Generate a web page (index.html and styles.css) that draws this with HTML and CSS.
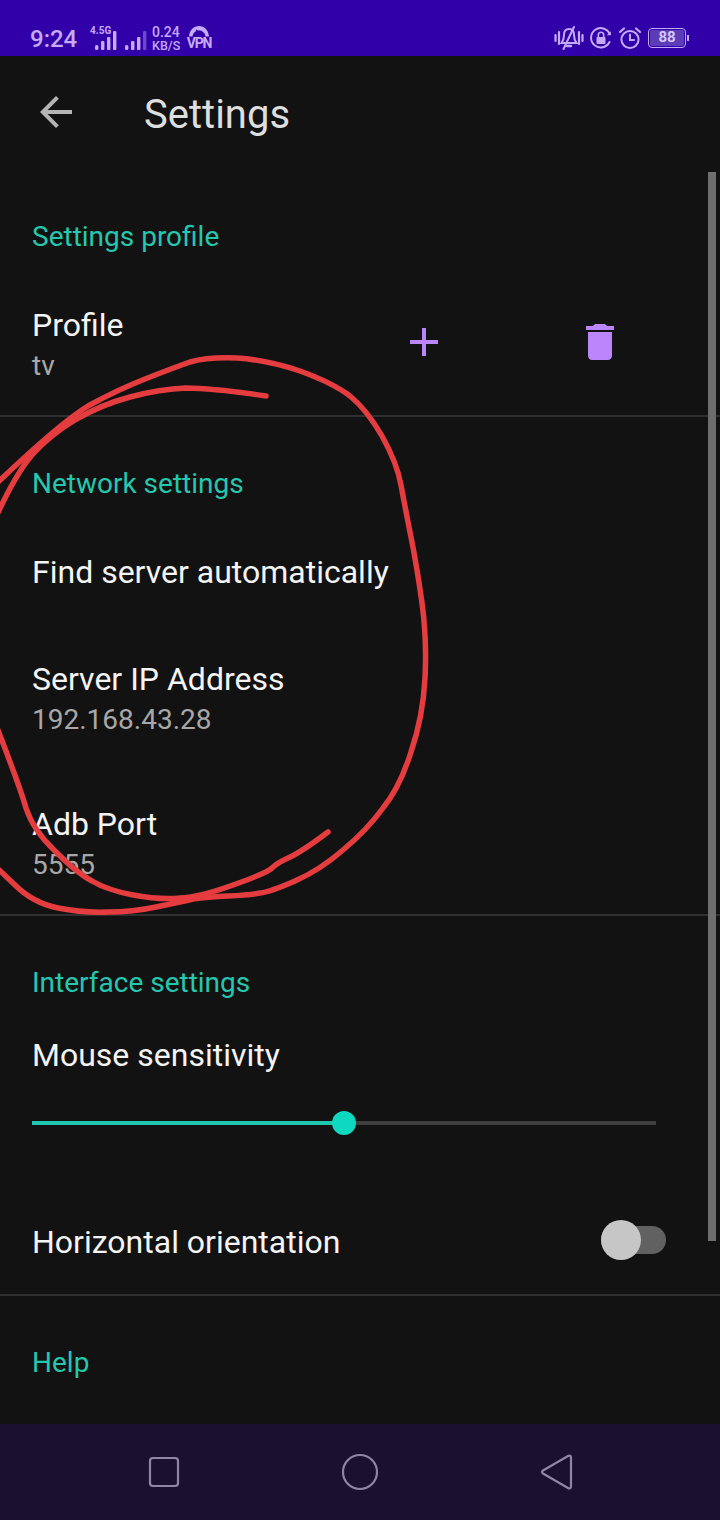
FILE: index.html
```html
<!DOCTYPE html>
<html lang="en">
<head>
<meta charset="utf-8">
<title>Settings</title>
<link rel="stylesheet" href="styles.css">
</head>
<body>
<div class="screen">
  <header class="statusbar">
    <div class="status-left">
      <span class="clock">9:24</span>
      <div class="signal">
        <span class="net">4.5G</span>
        <svg class="bars" width="24" height="21" viewBox="0 0 24 21"><rect x="0" y="15" width="3.4" height="5" rx="1.5"/><rect x="6" y="11" width="3.4" height="9" rx="1"/><rect x="12" y="7" width="3.4" height="13" rx="1"/><rect x="18" y="1" width="3.4" height="19" rx="1"/></svg>
      </div>
      <svg class="bars bars-two" width="24" height="21" viewBox="0 0 24 21"><rect x="0" y="15" width="3.4" height="5" rx="1.5"/><rect x="6" y="11" width="3.4" height="9" rx="1"/><rect x="12" y="7" width="3.4" height="13" rx="1"/><rect x="18" y="1" width="3.4" height="19" rx="1" class="dim"/></svg>
      <div class="speed"><span>0.24</span><span class="unit">KB/S</span></div>
      <div class="vpn">
        <svg width="24" height="12" viewBox="0 0 24 12"><path d="M2 11.500C2.500 5 7 1 12 1s9.500 4 10 10.500h-3.500C18 8 15.500 5.500 12 5.500S6 8 5.500 11.500z"/><path d="M9 5l6 5" class="needle"/></svg>
        <span>VPN</span>
      </div>
    </div>
    <div class="status-right">
      <svg class="si" width="30" height="26" viewBox="0 0 30 26" fill="none"><path d="M1.500 10v6M5 7v12M25 7v12M28.500 10v6" stroke-width="2.200"/><path d="M15 4c-3.500 0-5 2.500-5 6 0 4-1 6-2.500 8h15c-1.500-2-2.500-4-2.500-8 0-3.500-1.500-6-5-6z" stroke-width="2"/><path d="M13 21h4" stroke-width="2.400"/><path d="M20 2L9.500 24" stroke-width="2"/></svg>
      <svg class="si" width="22" height="22" viewBox="0 0 22 22" fill="none"><path d="M19.500 15A9.700 9.700 0 1 1 19.700 7" stroke-width="2"/><path d="M20.800 4.200v4h-4z" class="fillc"/><rect x="6.500" y="10" width="9" height="7" rx="1" class="fillc"/><path d="M8.300 10V8a2.700 2.700 0 0 1 5.400 0v2" stroke-width="1.600"/></svg>
      <svg class="si" width="24" height="24" viewBox="0 0 24 24" fill="none"><circle cx="12" cy="13.500" r="8.600" stroke-width="2"/><path d="M12 8.500v5.500h4" stroke-width="2"/><path d="M2 6l4-3.500M22 6l-4-3.500" stroke-width="2.200"/></svg>
      <div class="battery"><span class="battery-body">88</span><span class="battery-nub"></span></div>
    </div>
  </header>

  <div class="toolbar">
    <svg class="back" width="48" height="48" viewBox="0 0 24 24"><path d="M20 11H7.830l5.590-5.590L12 4l-8 8 8 8 1.410-1.410L7.830 13H20v-2z"/></svg>
    <h1 class="title">Settings</h1>
  </div>

  <main class="content">
    <section class="section section-profile">
      <h2 class="section-title">Settings profile</h2>
      <div class="pref pref-profile">
        <div>
          <div class="pref-title">Profile</div>
          <div class="pref-sub">tv</div>
        </div>
        <div class="actions">
          <svg class="action" width="48" height="48" viewBox="0 0 24 24"><path d="M19 13h-6v6h-2v-6H5v-2h6V5h2v6h6v2z"/></svg>
          <svg class="action" width="48" height="48" viewBox="0 0 24 24"><path d="M6 19c0 1.100.9 2 2 2h8c1.100 0 2-.9 2-2V7H6v12zM19 4h-3.500l-1-1h-5l-1 1H5v2h14V4z"/></svg>
        </div>
      </div>
    </section>

    <section class="section section-network">
      <h2 class="section-title">Network settings</h2>
      <div class="pref pref-find"><div class="pref-title">Find server automatically</div></div>
      <div class="pref pref-ip">
        <div class="pref-title">Server IP Address</div>
        <div class="pref-sub">192.168.43.28</div>
      </div>
      <div class="pref pref-port">
        <div class="pref-title">Adb Port</div>
        <div class="pref-sub">5555</div>
      </div>
    </section>

    <section class="section section-interface">
      <h2 class="section-title">Interface settings</h2>
      <div class="pref-title mouse">Mouse sensitivity</div>
      <div class="slider">
        <div class="slider-fill"></div>
        <div class="slider-thumb"></div>
      </div>
      <div class="pref-horizontal">
        <div class="pref-title">Horizontal orientation</div>
        <div class="toggle"><div class="toggle-thumb"></div></div>
      </div>
    </section>

    <section class="section section-help">
      <h2 class="section-title">Help</h2>
    </section>
  </main>

  <nav class="navbar">
    <svg width="32" height="32" viewBox="0 0 32 32" fill="none"><rect x="2" y="2" width="28" height="28" rx="3"/></svg>
    <svg width="38" height="38" viewBox="0 0 38 38" fill="none"><circle cx="19" cy="19" r="17"/></svg>
    <svg width="34" height="36" viewBox="0 0 34 36" fill="none"><path d="M3 16.500L28 2c1.500-.8 3-.3 3 1.500v29c0 1.800-1.500 2.300-3 1.500L3 19.500c-1.300-.8-1.300-2.200 0-3z"/></svg>
  </nav>

  <div class="scrollbar"></div>

  <svg class="scribble" width="720" height="1520" viewBox="0 0 720 1520" fill="none">
    <path d="M-4 484Q60 423 88 406Q117 390 145 379Q173 368 190 362Q207 357 237 358Q267 360 300 371Q333 383 350 396Q367 410 382 436Q397 463 401 485Q405 507 411 537Q417 567 422 603Q427 640 425 678Q423 717 411 752Q400 787 383 808Q367 830 343 850Q320 870 295 881Q270 892 260 893Q250 895 228 896Q207 897 193 899Q180 902 156 907Q133 912 108 912Q83 913 58 908Q33 903 15 885L-4 867"/>
    <path d="M266 396Q213 388 186 388Q160 389 130 397Q100 405 75 420Q50 435 32 455Q15 475 -4 517"/>
    <path d="M-4 725Q20 787 26 808Q33 830 55 851Q77 873 92 881Q107 890 133 895Q160 900 180 898Q200 897 233 885Q267 873 272 868Q277 863 288 858Q300 853 328 832"/>
  </svg>
</div>
</body>
</html>
```
FILE: styles.css
```css
* { box-sizing: border-box; }
html, body { margin: 0; padding: 0; }
body { background: #121212; font-family: Roboto, "Noto Sans", sans-serif; }
.screen { position: relative; width: 720px; height: 1520px; overflow: hidden; background: #121212; display: flex; flex-direction: column; }

.statusbar { height: 56px; flex: none; background: #3200a9; color: #c4aaf8; display: flex; justify-content: space-between; align-items: flex-end; padding: 0 31px 4px 30px; }
.status-left, .status-right { display: flex; align-items: center; }
.status-left { height: 26px; }
.clock { font-size: 24px; font-weight: 500; line-height: 26px; width: 65px; }
.signal { position: relative; width: 30px; height: 21px; margin-top: 2px; }
.net { position: absolute; left: -5px; top: -4px; font-size: 10px; font-weight: 700; line-height: 10px; }
.bars { fill: #c4aaf8; display: block; }
.signal .bars { position: absolute; left: 0; top: 0; }
.bars-two { margin-top: 2px; }
.bars .dim { fill: #6c47cf; }
.speed { display: flex; flex-direction: column; margin-left: 3px; width: 35px; font-size: 14px; font-weight: 500; line-height: 13px; }
.unit { font-size: 12.500px; }
.vpn { display: flex; flex-direction: column; align-items: center; width: 24px; margin-bottom: 4px; font-size: 14px; font-weight: 700; line-height: 12px; letter-spacing: -1.200px; }
.vpn svg { fill: #c4aaf8; display: block; }
.vpn .needle { stroke: #3200a9; stroke-width: 1.200; fill: none; }
.status-right { height: 28px; }
.si { stroke: #c4aaf8; display: block; stroke-linecap: round; margin-right: 6px; }
.si .fillc { fill: #c4aaf8; stroke: none; }
.battery { display: flex; align-items: center; }
.battery-body { width: 38px; height: 20px; border: 1.500px solid #c4aaf8; border-radius: 4px; background: #5c3cb8; background-clip: content-box; padding: 1px; color: #d6c6fb; font-size: 15px; font-weight: 700; line-height: 15px; text-align: center; }
.battery-nub { width: 2px; height: 6px; background: #c4aaf8; margin-left: 1px; }

.toolbar { height: 116px; flex: none; display: flex; align-items: center; padding-left: 32px; }
.back { fill: #b4b4b4; display: block; margin-top: -4px; }
.title { margin: 2px 0 0 64px; font-size: 40px; font-weight: 400; line-height: 40px; color: #dedede; }

.content { flex: 1; min-height: 0; }
.section { border-bottom: 2px solid #2f2f2f; padding-left: 32px; }
.section-title { margin: 0; font-size: 28px; font-weight: 400; line-height: 40px; color: #25c7ae; }
.pref-title { font-size: 32px; line-height: 40px; color: #f4f4f4; }
.pref-sub { font-size: 28px; line-height: 40px; color: #a8a8a8; padding-top: 1px; }

.section-profile { padding-top: 45px; height: 245px; }
.pref-profile { display: flex; justify-content: space-between; align-items: center; padding: 48px 96px 30px 0; }
.actions { display: flex; gap: 128px; margin-top: -8px; }
.action { fill: #bb86fc; display: block; }

.section-network { padding-top: 47px; height: 499px; }
.pref-find { margin-top: 48px; }
.pref-ip { margin-top: 67px; }
.pref-port { margin-top: 64px; }

.section-interface { padding-top: 47px; height: 380px; padding-right: 32px; }
.mouse { margin-top: 32px; }
.slider { position: relative; width: 624px; height: 4px; margin-top: 46px; background: #3f3f3f; }
.slider-fill { width: 312px; height: 4px; background: #1ec9b0; }
.slider-thumb { position: absolute; left: 300px; top: -10px; width: 24px; height: 24px; border-radius: 50%; background: #0fd8c0; }
.pref-horizontal { display: flex; justify-content: space-between; align-items: center; margin-top: 97px; padding-right: 22px; }
.toggle { position: relative; width: 65px; height: 28px; border-radius: 14px; background: #616161; margin-top: -4px; }
.toggle-thumb { position: absolute; left: 0; top: -6px; width: 40px; height: 40px; border-radius: 50%; background: #c6c6c6; }

.section-help { border-bottom: 0; padding-top: 47px; }

.navbar { height: 96px; flex: none; background: #1a1030; display: flex; justify-content: center; align-items: center; gap: 161px; padding-left: 2px; }
.navbar svg { stroke: #8f86a6; stroke-width: 2.200; display: block; }

.scrollbar { position: absolute; left: 708px; top: 172px; width: 8px; height: 1069px; background: #6e6e6e; }
.scribble { position: absolute; left: 0; top: 0; }
.scribble path { stroke: #e53c40; stroke-width: 5.500; stroke-linecap: round; stroke-linejoin: round; }
```
